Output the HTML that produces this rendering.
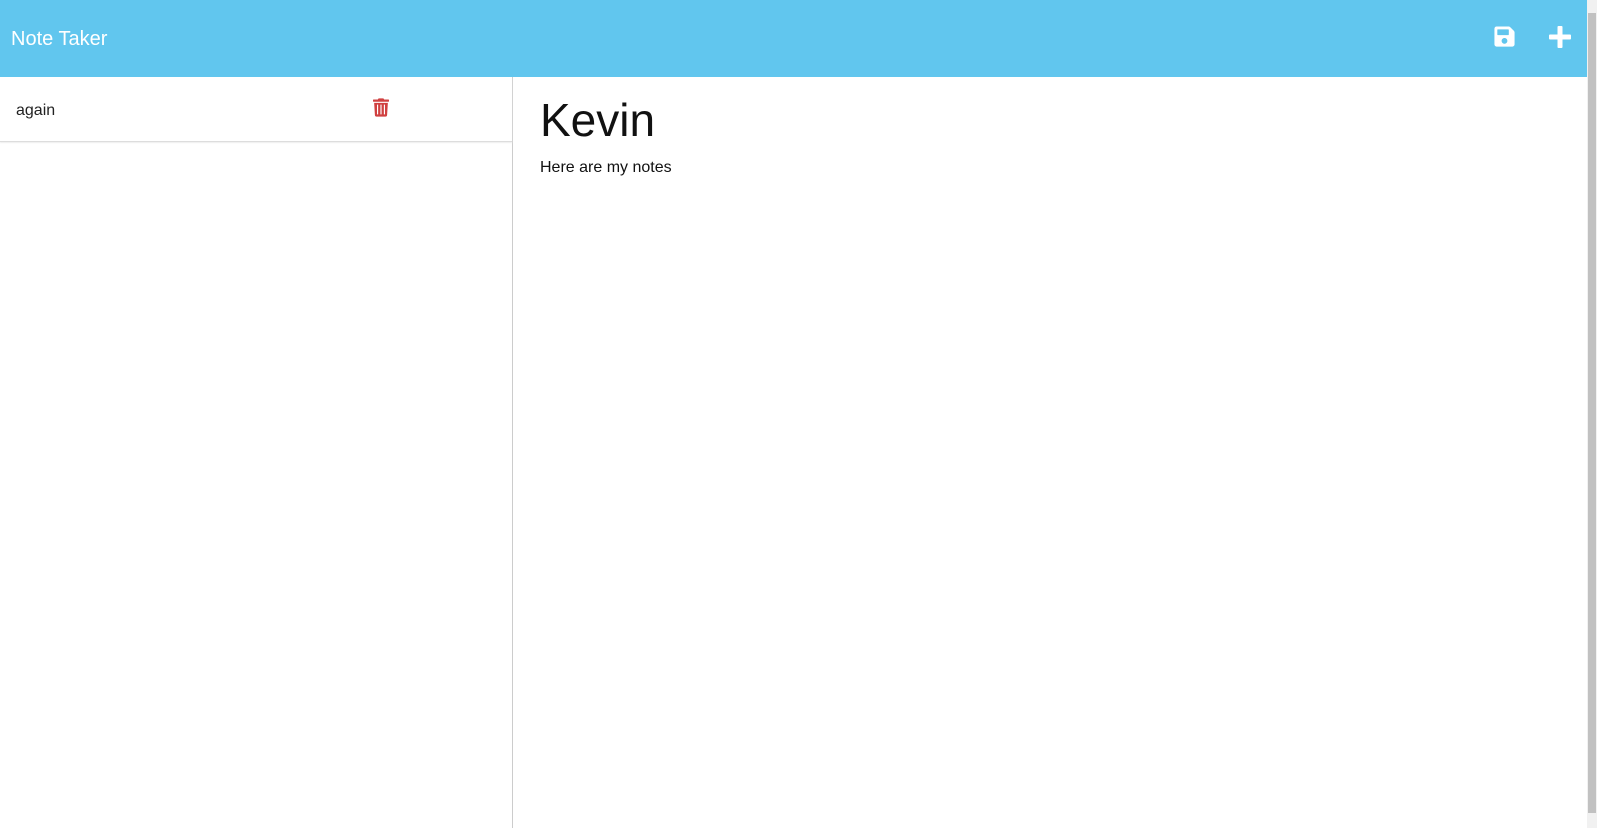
<!DOCTYPE html>
<html><head><style>
html,body{margin:0;padding:0;width:1597px;height:828px;overflow:hidden;background:#fff;font-family:"Segoe UI","Liberation Sans",sans-serif;}
.nav{position:absolute;left:0;top:0;width:1587px;height:77px;background:#61c6ee;}
.nav .t{position:absolute;left:11px;top:28px;color:#fff;font-size:20px;}
.side{position:absolute;left:0;top:77px;width:512px;height:751px;border-right:1px solid #ccc;}
.item{height:64px;border-bottom:1px solid #ddd;position:relative;box-shadow:0 1px 1px #eee;}
.item span{position:absolute;left:16px;top:25px;font-size:16px;color:#222;}
.main{position:absolute;left:540px;top:93px;}
.main h1{margin:0;font-weight:normal;font-size:46px;color:#111;}
.main p{margin:12px 0 0;font-size:16px;color:#111;}
.sb{position:absolute;left:1587px;top:0;width:10px;height:828px;background:#f1f1f1;}
.sb div{position:absolute;left:1px;top:13px;width:8px;height:800px;background:#c1c1c1;}
</style></head><body>
<div class="nav"><div class="t">Note Taker</div>
<svg style="position:absolute;left:1493px;top:25px" width="23" height="23" viewBox="0 0 448 512"><path fill="#fff" d="M433.9 129.9l-83.9-83.9A48 48 0 0 0 316.1 32H48C21.5 32 0 53.5 0 80v352c0 26.5 21.5 48 48 48h352c26.5 0 48-21.5 48-48V163.9a48 48 0 0 0-14.1-34zM224 416c-35.3 0-64-28.7-64-64s28.7-64 64-64 64 28.7 64 64-28.7 64-64 64zm96-304.5V212c0 6.6-5.4 12-12 12H76c-6.6 0-12-5.4-12-12V108c0-6.6 5.4-12 12-12h228.5c3.2 0 6.200 1.3 8.5 3.5l3.5 3.5A12 12 0 0 1 320 111.5z"/></svg>
<svg style="position:absolute;left:1549px;top:26px" width="22" height="22" viewBox="0 0 22 22"><rect x="8.5" y="0" width="5" height="22" rx="1" fill="#fff"/><rect x="0" y="8.5" width="22" height="5" rx="1" fill="#fff"/></svg>
</div>
<div class="side"><div class="item"><span>again</span>
<svg style="position:absolute;left:373px;top:21px" width="16" height="19" viewBox="0 0 448 512"><path fill="#d04040" d="M432 32H312l-9.4-18.7A24 24 0 0 0 281.1 0H166.8a23.7 23.7 0 0 0-21.4 13.3L136 32H16A16 16 0 0 0 0 48v32a16 16 0 0 0 16 16h416a16 16 0 0 0 16-16V48a16 16 0 0 0-16-16zM53.2 467a48 48 0 0 0 47.9 45h245.8a48 48 0 0 0 47.9-45L416 128H32zM304 176h32v272h-32zm-96 0h32v272h-32zm-96 0h32v272h-32z"/></svg>
</div></div>
<div class="main"><h1>Kevin</h1><p>Here are my notes</p></div>
<div class="sb"><div></div></div>
</body></html>
